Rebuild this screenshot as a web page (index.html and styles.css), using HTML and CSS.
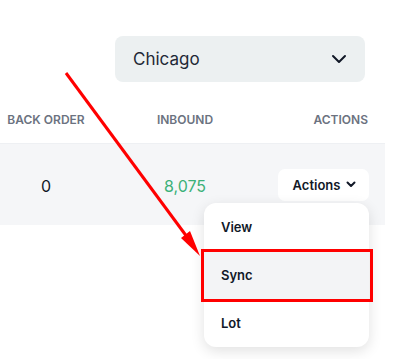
FILE: index.html
```html
<!doctype html>
<html lang="en">
<head>
    <meta charset="UTF-8">
    <link rel="stylesheet" href="styles.css">
    <title>Inventory</title>
</head>
<body>
    <div class="page">
        <div class="location">
            <span>Chicago</span>
            <svg width="16" height="10" viewBox="0 0 16 10">
                <path d="M2 2l6 6 6-6" fill="none" stroke="#111827" stroke-width="2" stroke-linecap="round" stroke-linejoin="round"/>
            </svg>
        </div>

        <div class="table">
            <div class="head">
                <div class="cell c1">Back Order</div>
                <div class="cell c2">Inbound</div>
                <div class="cell c3">Actions</div>
            </div>
            <div class="row">
                <div class="cell c1 num">0</div>
                <div class="cell c2 num inbound">8,075</div>
                <div class="cell c3">
                    <button class="actions">
                        Actions
                        <svg width="10" height="7" viewBox="0 0 10 7">
                            <path d="M1.5 1.5l3.5 3.5 3.5-3.5" fill="none" stroke="#111827" stroke-width="2" stroke-linecap="round" stroke-linejoin="round"/>
                        </svg>
                    </button>
                </div>
            </div>
        </div>

        <div class="menu">
            <div class="item">View</div>
            <div class="item active">Sync</div>
            <div class="item">Lot</div>
        </div>

        <div class="highlight"></div>

        <svg class="arrow" width="405" height="359" viewBox="0 0 405 359">
            <line x1="66" y1="73" x2="193" y2="245" stroke="#ff0000" stroke-width="3"/>
            <polygon points="200,256 181,238 190,231" fill="#ff0000"/>
        </svg>
    </div>
</body>
</html>
```

FILE: styles.css
```css
body {
    margin: 0;
    padding: 0;
    background-color: #ffffff;
    font-family: Inter, "Noto Sans", sans-serif;
    color: #111827;
}

.page {
    position: relative;
    width: 405px;
    height: 359px;
    overflow: hidden;
    padding-top: 36px;
    box-sizing: border-box;
}

.location {
    margin-left: 115px;
    width: 250px;
    height: 46px;
    box-sizing: border-box;
    padding: 0 18px;
    display: flex;
    align-items: center;
    justify-content: space-between;
    background-color: #ecf0f1;
    border-radius: 8px;
    font-size: 17px;
    color: #1f2937;
}

.table {
    width: 385px;
    margin-top: 14px;
}

.head,
.row {
    display: grid;
    grid-template-columns: 92px 186px 107px;
    align-items: center;
}

.head {
    height: 47px;
    font-size: 12px;
    font-weight: 600;
    text-transform: uppercase;
    color: #6b7280;
}

.row {
    height: 82px;
    background-color: #f5f6f8;
    border-top: 1px solid #eef0f3;
    box-sizing: border-box;
}

.c1,
.c2 {
    text-align: center;
}

.c3 {
    display: flex;
    justify-content: flex-end;
    padding-right: 16px;
}

.head .c3 {
    padding-right: 17px;
}

.num {
    font-size: 16px;
    padding-top: 2px;
}

.inbound {
    color: #3cb179;
}

.actions {
    width: 94px;
    height: 32px;
    display: flex;
    align-items: center;
    justify-content: center;
    gap: 6px;
    border: none;
    border-radius: 7px;
    background-color: #ffffff;
    font-family: Inter, "Noto Sans", sans-serif;
    font-size: 13px;
    font-weight: 600;
    color: #111827;
    padding: 0 0 0 2px;
}

.menu {
    position: absolute;
    top: 203px;
    left: 204px;
    width: 165px;
    background-color: #ffffff;
    border-radius: 12px;
    box-shadow: 0 4px 14px rgba(0, 0, 0, 0.12);
    overflow: hidden;
}

.item {
    height: 48px;
    display: flex;
    align-items: center;
    padding-left: 17px;
    font-size: 13px;
    font-weight: 600;
    color: #111827;
}

.item.active {
    background-color: #f3f4f6;
}

.highlight {
    position: absolute;
    top: 249px;
    left: 201px;
    width: 172px;
    height: 53px;
    box-sizing: border-box;
    border: 3px solid #ff0000;
}

.arrow {
    position: absolute;
    top: 0;
    left: 0;
}
```
